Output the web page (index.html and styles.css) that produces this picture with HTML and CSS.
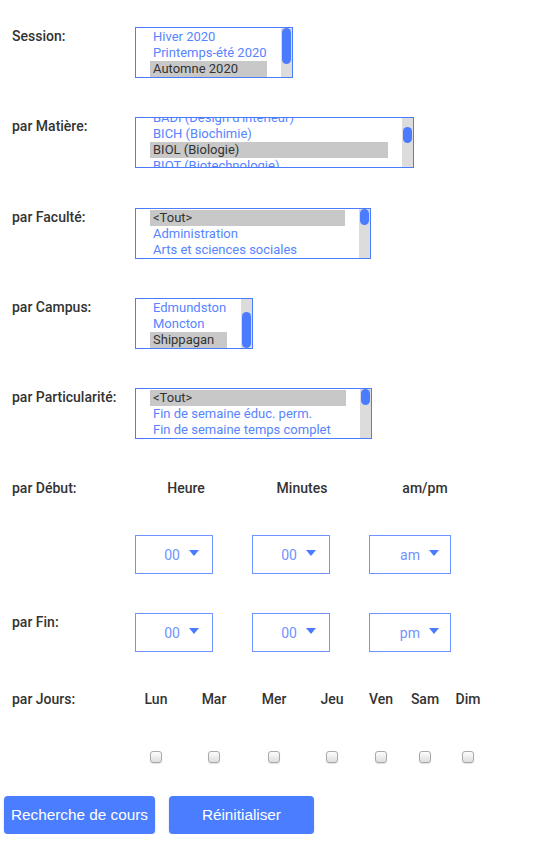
FILE: index.html
```html
<!DOCTYPE html>
<html lang="fr">
<head>
    <meta charset="UTF-8">
    <meta name="viewport" content="width=device-width, initial-scale=1.0">
    <title>Recherche de cours</title>
    <link rel="stylesheet" href="styles.css">
</head>
<body>
    <form class="search-form">

        <!-- Session -->
        <div class="field-row">
            <label class="field-label">Session:</label>
            <div class="listbox">
                <div class="listbox-options listbox-options--session">
                    <div class="option">Hiver 2020</div>
                    <div class="option">Printemps-été 2020</div>
                    <div class="option option--selected">Automne 2020</div>
                </div>
                <div class="listbox-track"><div class="listbox-thumb listbox-thumb--long"></div></div>
            </div>
        </div>

        <!-- Matiere -->
        <div class="field-row field-row--loose">
            <label class="field-label">par Matière:</label>
            <div class="listbox">
                <div class="listbox-options listbox-options--matiere">
                    <div class="listbox-scroll">
                        <div class="option">BADI (Design d'intérieur)</div>
                        <div class="option">BICH (Biochimie)</div>
                        <div class="option option--selected">BIOL (Biologie)</div>
                        <div class="option">BIOT (Biotechnologie)</div>
                    </div>
                </div>
                <div class="listbox-track"><div class="listbox-thumb listbox-thumb--mid"></div></div>
            </div>
        </div>

        <!-- Faculte -->
        <div class="field-row">
            <label class="field-label">par Faculté:</label>
            <div class="listbox">
                <div class="listbox-options listbox-options--faculte">
                    <div class="option option--selected">&lt;Tout&gt;</div>
                    <div class="option">Administration</div>
                    <div class="option">Arts et sciences sociales</div>
                </div>
                <div class="listbox-track"><div class="listbox-thumb"></div></div>
            </div>
        </div>

        <!-- Campus -->
        <div class="field-row">
            <label class="field-label">par Campus:</label>
            <div class="listbox">
                <div class="listbox-options listbox-options--campus">
                    <div class="option">Edmundston</div>
                    <div class="option">Moncton</div>
                    <div class="option option--selected">Shippagan</div>
                </div>
                <div class="listbox-track listbox-track--end"><div class="listbox-thumb listbox-thumb--long"></div></div>
            </div>
        </div>

        <!-- Particularite -->
        <div class="field-row field-row--loose">
            <label class="field-label">par Particularité:</label>
            <div class="listbox">
                <div class="listbox-options listbox-options--particularite">
                    <div class="option option--selected">&lt;Tout&gt;</div>
                    <div class="option">Fin de semaine éduc. perm.</div>
                    <div class="option">Fin de semaine temps complet</div>
                </div>
                <div class="listbox-track"><div class="listbox-thumb"></div></div>
            </div>
        </div>

        <!-- Debut -->
        <div class="field-row">
            <label class="field-label">par Début:</label>
            <div class="time-heads">
                <span class="time-head time-head--hour">Heure</span>
                <span class="time-head time-head--min">Minutes</span>
                <span class="time-head time-head--ampm">am/pm</span>
            </div>
        </div>
        <div class="field-row">
            <span class="field-label"></span>
            <div class="time-selects">
                <div class="time-select">00 <span class="caret"></span></div>
                <div class="time-select">00 <span class="caret"></span></div>
                <div class="time-select time-select--wide">am <span class="caret"></span></div>
            </div>
        </div>

        <!-- Fin -->
        <div class="field-row field-row--tight">
            <label class="field-label">par Fin:</label>
            <div class="time-selects">
                <div class="time-select">00 <span class="caret"></span></div>
                <div class="time-select">00 <span class="caret"></span></div>
                <div class="time-select time-select--wide">pm <span class="caret"></span></div>
            </div>
        </div>

        <!-- Jours -->
        <div class="days days--heads">
            <label class="field-label">par Jours:</label>
            <span class="day">Lun</span>
            <span class="day">Mar</span>
            <span class="day">Mer</span>
            <span class="day">Jeu</span>
            <span class="day">Ven</span>
            <span class="day">Sam</span>
            <span class="day">Dim</span>
        </div>
        <div class="days">
            <span></span>
            <span class="day"><input type="checkbox" class="day-check"></span>
            <span class="day"><input type="checkbox" class="day-check"></span>
            <span class="day"><input type="checkbox" class="day-check"></span>
            <span class="day"><input type="checkbox" class="day-check"></span>
            <span class="day"><input type="checkbox" class="day-check"></span>
            <span class="day"><input type="checkbox" class="day-check"></span>
            <span class="day"><input type="checkbox" class="day-check"></span>
        </div>

        <div class="actions">
            <button type="button" class="btn">Recherche de cours</button>
            <button type="button" class="btn btn--reset">Réinitialiser</button>
        </div>
    </form>
</body>
</html>
```

FILE: styles.css
```css
    body {
        margin: 0;
        font-family: Roboto, "Liberation Sans", sans-serif;
        background-color: #fff;
        color: #333;
    }
    .search-form {
        padding: 27px 0 0 12px;
    }
    .field-row {
        display: flex;
        margin-bottom: 39px;
    }
    .field-row--loose {
        margin-bottom: 40px;
    }
    .field-row--tight {
        margin-bottom: 38px;
    }
    .field-label {
        width: 119px;
        flex: none;
        padding-top: 1px;
        font-size: 14px;
        font-weight: 500;
        line-height: 16px;
        color: #333;
    }

    /* list boxes */
    .listbox {
        display: flex;
        height: 51px;
        box-sizing: border-box;
        margin-left: 4px;
        border: 1px solid #4b7bff;
        background-color: #fff;
    }
    .listbox-options {
        padding: 1px 14px;
        overflow: hidden;
        font-size: 13px;
    }
    .listbox-options--session { width: 117px; }
    .listbox-options--matiere { width: 238px; }
    .listbox-options--faculte { width: 195px; }
    .listbox-options--campus { width: 77px; }
    .listbox-options--particularite { width: 196px; }
    .listbox-scroll {
        margin-top: -9px;
    }
    .option {
        height: 16px;
        line-height: 16px;
        padding: 0 3px;
        color: #5784ff;
        white-space: nowrap;
        overflow: hidden;
    }
    .option--selected {
        background-color: #c8c8c8;
        color: #333;
    }
    .listbox-track {
        width: 11px;
        display: flex;
        flex-direction: column;
        background-color: #dcdcdc;
    }
    .listbox-track--end {
        justify-content: flex-end;
    }
    .listbox-thumb {
        height: 16px;
        margin: 0 1px;
        border-radius: 5px;
        background-color: #4b7bff;
    }
    .listbox-thumb--long {
        height: 36px;
    }
    .listbox-thumb--mid {
        margin-top: 9px;
    }

    /* time pickers */
    .time-heads {
        display: flex;
        font-size: 14px;
        font-weight: 500;
        line-height: 16px;
        padding-top: 1px;
    }
    .time-head {
        text-align: center;
    }
    .time-head--hour { width: 110px; }
    .time-head--min { width: 122px; }
    .time-head--ampm { width: 124px; }
    .time-selects {
        display: flex;
        margin-left: 4px;
        gap: 39px;
    }
    .time-select {
        width: 78px;
        height: 39px;
        box-sizing: border-box;
        display: flex;
        align-items: center;
        justify-content: flex-end;
        gap: 9px;
        padding-right: 13px;
        border: 1px solid #6f93ff;
        color: #6f93ff;
        font-size: 14px;
    }
    .time-select--wide {
        width: 82px;
        padding-right: 11px;
    }
    .caret {
        width: 0;
        height: 0;
        margin-top: -3px;
        border-left: 5px solid transparent;
        border-right: 5px solid transparent;
        border-top: 6px solid #4b7bff;
    }

    /* days */
    .days {
        display: grid;
        grid-template-columns: 124px 58px 60px 58px 49px 44px 43px 40px;
        align-items: center;
    }
    .days .field-label {
        width: auto;
    }
    .days--heads {
        margin-bottom: 43px;
    }
    .day {
        width: 40px;
        display: flex;
        justify-content: center;
        font-size: 14px;
        font-weight: 500;
        line-height: 16px;
        padding-top: 1px;
    }
    .day-check {
        appearance: none;
        -webkit-appearance: none;
        width: 12px;
        height: 12px;
        margin: 0;
        border: 1px solid #a9a9a9;
        border-radius: 3px;
        background: linear-gradient(#fdfdfd, #dedede);
        box-shadow: 0 1px 1px rgba(0, 0, 0, 0.12);
    }

    /* buttons */
    .actions {
        display: flex;
        gap: 14px;
        margin: 33px 0 0 -8px;
    }
    .btn {
        height: 38px;
        padding: 0 7px;
        border: none;
        border-radius: 4px;
        background-color: #4a7dff;
        color: #fff;
        font-family: "Liberation Sans", Arial, sans-serif;
        font-size: 15.3px;
        box-shadow: 0 1px 2px rgba(0, 0, 0, 0.2);
        cursor: pointer;
    }
    .btn--reset {
        padding: 0 33px;
    }
```
